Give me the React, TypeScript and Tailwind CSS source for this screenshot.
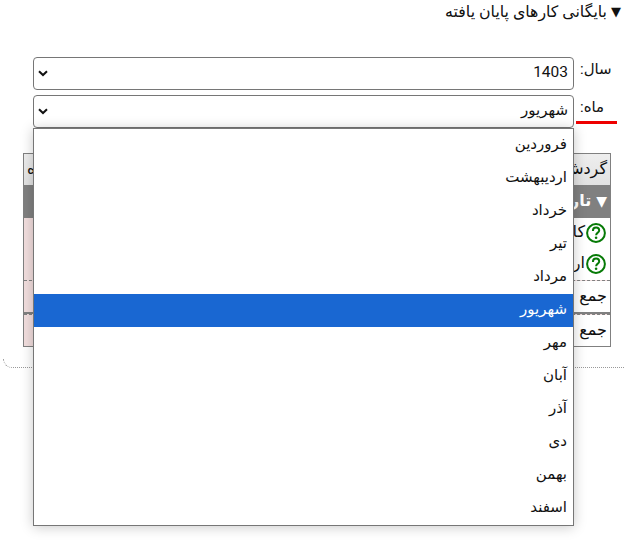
const months = ["فروردین", "اردیبهشت", "خرداد", "تیر", "مرداد", "شهریور", "مهر", "آبان", "آذر", "دی", "بهمن", "اسفند"];

function Chevron() {
  return (
    <svg width="10" height="7" viewBox="0 0 10 7" className="shrink-0">
      <path d="M1 1.2 L5 5 L9 1.2" fill="none" stroke="#111" strokeWidth="2" />
    </svg>
  );
}

function Question() {
  return (
    <svg width="20" height="20" viewBox="0 0 20 20" className="shrink-0">
      <circle cx="10" cy="10" r="8.9" fill="#fff" stroke="#067a06" strokeWidth="2" />
      <path d="M6.9 7.9 C6.9 5.7 8.4 4.6 10.1 4.6 C11.9 4.6 13.2 5.8 13.2 7.4 C13.2 9.6 10.1 9.7 10.1 12.2" fill="none" stroke="#067a06" strokeWidth="2" />
      <circle cx="10.1" cy="14.8" r="1.3" fill="#067a06" />
    </svg>
  );
}

function Field({ label, value, underline, num }: { label: string; value: string; underline?: boolean; num?: boolean }) {
  return (
    <div className="flex items-stretch h-[33px]">
      <div className="w-[50px] relative shrink-0 text-left pl-[6px] pt-[1px] text-[15px] leading-[22px] tracking-[0.5px]">
        {label}
        {underline && <div className="absolute left-[2px] right-[7px] bottom-[4px] h-[3px] bg-[#ee0000]" />}
      </div>
      <div className="w-[541px] border border-[#767676] rounded-[4px] bg-white flex items-center justify-between pr-[5px] pl-[4px] text-[15px]">
        <span className={num ? "text-[15.5px] pb-[2px]" : "pb-[2px]"}>{value}</span>
        <Chevron />
      </div>
    </div>
  );
}

export default function App() {
  return (
    <div dir="rtl" className="relative w-[624px] h-[557px] overflow-hidden bg-white text-[#111] font-['Roboto','Noto_Sans','DejaVu_Sans',sans-serif]">
      <div className="h-[57px] pr-[3px] pt-[1px] text-[15.8px] leading-[22px] flex items-start gap-[4px]">
        <span className="text-[13px]">▼</span>
        <span>بایگانی کارهای پایان یافته</span>
      </div>

      <div className="flex flex-col gap-[5px]">
        <Field label="سال:" value="1403" num />
        <Field label="ماه:" value="شهریور" underline />
      </div>

      <div className="mt-[25px] mr-[13px] w-[588px] h-[194px] border border-[#808080] flex flex-col text-[16px]">
        <div className="h-[31px] shrink-0 bg-gradient-to-b from-[#eeeeee] to-[#e2e2e2] flex items-center justify-between px-[3px] pb-[2px]">
          <span>گردش</span>
          <span>ه</span>
        </div>
        <div className="h-[33px] shrink-0 bg-[#808080] text-white font-bold flex items-center pr-[3px] gap-[5px]">
          <span className="text-[14px]">▼</span>
          <span className="pb-[2px]">تاریخ</span>
        </div>
        <div className="h-[62px] shrink-0 bg-[#f2dede] flex">
          <div className="w-[200px] bg-white pt-[5px] pr-[4px] flex flex-col gap-[11px]">
            <div className="flex items-center gap-[1px] h-[20px]"><Question /><span className="pb-[2px]">کار</span></div>
            <div className="flex items-center gap-[1px] h-[20px]"><Question /><span className="pb-[2px]">ارز</span></div>
          </div>
        </div>
        <div className="h-[32px] shrink-0 bg-[#f2dede] border-t border-dashed border-[#808080] flex">
          <div className="w-[200px] bg-white pr-[3px] pb-[2px] flex items-center">جمع</div>
        </div>
        <div className="h-[2px] shrink-0 bg-[#808080]" />
        <div className="flex-1 bg-[#f2dede] border-t border-dashed border-[#808080] flex">
          <div className="w-[200px] bg-white pr-[3px] pb-[2px] flex items-center">جمع</div>
        </div>
      </div>

      <div className="mt-[12px] ml-[3px] h-[9px] border-b border-l border-dotted border-[#999999] rounded-bl-[10px]" />

      <div className="absolute left-[33px] top-[128px] w-[541px] h-[398px] bg-white border border-[#767676] shadow-[0_1px_12px_rgba(0,0,0,0.22)] text-[15px]">
        <div className="flex flex-col">
          {months.map((m) => (
            <div key={m} className={m === "شهریور" ? "h-[33px] shrink-0 flex items-center pr-[6px] pb-[2px] bg-[#1967d2] text-white" : "h-[33px] shrink-0 flex items-center pr-[6px] pb-[2px]"}>
              {m}
            </div>
          ))}
        </div>
      </div>
    </div>
  );
}
